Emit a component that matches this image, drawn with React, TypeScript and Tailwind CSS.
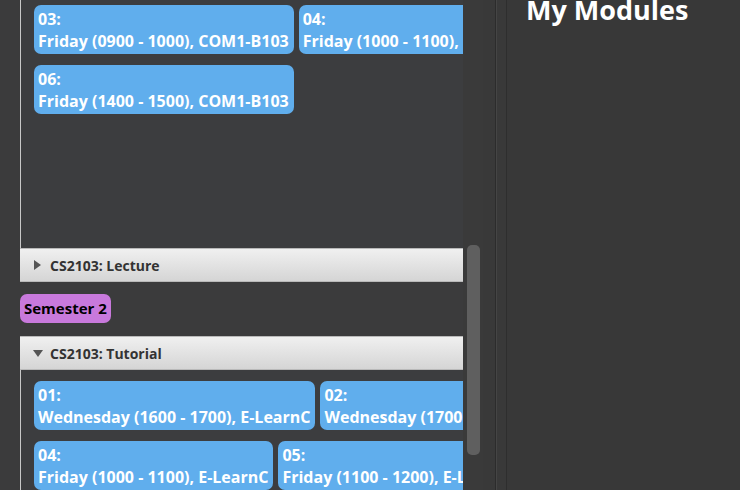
import React from "react";

const font = { fontFamily: '"Open Sans", "Noto Sans", sans-serif' };

function Card({ num, text }: { num: string; text: string }) {
  return (
    <div className="shrink-0 h-[49px] rounded-[7px] bg-[#60aeed] pl-[4px] pr-[5px] pt-[3px] text-[16px] font-bold leading-[22px] text-white whitespace-nowrap">
      <div>{num}</div>
      <div>{text}</div>
    </div>
  );
}

function Header({ open, title }: { open: boolean; title: string }) {
  return (
    <div className="flex h-[34px] shrink-0 items-center border-y border-[#b9b9b9] bg-gradient-to-b from-[#f0f0f0] to-[#d5d5d5] pl-[13px]">
      <svg width="10" height="10" viewBox="0 0 10 10" className="mr-[7px]">
        {open ? (
          <polygon points="0,2 10,2 5,9" fill="#555" />
        ) : (
          <polygon points="1,0 8,5 1,10" fill="#555" />
        )}
      </svg>
      <span className="text-[14px] font-bold text-[#333]">{title}</span>
    </div>
  );
}

export default function App() {
  return (
    <div className="flex h-[490px] w-[740px] overflow-hidden bg-[#3b3b3c]" style={font}>
      {/* left scroll content */}
      <div className="flex w-[463px] shrink-0 flex-col overflow-hidden">
        <div className="ml-[20px] flex h-[248px] shrink-0 flex-col gap-[11px] overflow-hidden border-l border-[#c8c8c8] bg-[#3c3d3f] pl-[13px] pt-[5px]">
          <div className="flex gap-[5px]">
            <Card num="03:" text="Friday (0900 - 1000), COM1-B103" />
            <Card num="04:" text="Friday (1000 - 1100), COM1-B103" />
          </div>
          <div className="flex gap-[5px]">
            <Card num="06:" text="Friday (1400 - 1500), COM1-B103" />
          </div>
        </div>
        <div className="ml-[20px]">
          <Header open={false} title="CS2103: Lecture" />
        </div>
        <div className="ml-[20px] mt-[12px] flex">
          <div className="flex h-[29px] items-center rounded-[7px] bg-[#c879dc] px-[4px] text-[15px] font-bold text-black">
            Semester 2
          </div>
        </div>
        <div className="ml-[20px] mt-[13px]">
          <Header open={true} title="CS2103: Tutorial" />
        </div>
        <div className="ml-[20px] flex flex-1 flex-col gap-[11px] overflow-hidden border-l border-[#c8c8c8] bg-[#3c3d3f] pl-[13px] pt-[11px]">
          <div className="flex gap-[5px]">
            <Card num="01:" text="Wednesday (1600 - 1700), E-LearnC" />
            <Card num="02:" text="Wednesday (1700 - 1800), E-LearnC" />
          </div>
          <div className="flex gap-[5px]">
            <Card num="04:" text="Friday (1000 - 1100), E-LearnC" />
            <Card num="05:" text="Friday (1100 - 1200), E-LearnC" />
          </div>
        </div>
      </div>
      {/* scrollbar */}
      <div className="relative w-[20px] shrink-0 bg-[#3a3a3a]">
        <div className="absolute left-[4px] top-[245px] h-[210px] w-[13px] rounded-[5px] bg-[#5f5f5f]" />
      </div>
      {/* divider */}
      <div className="w-[12px] shrink-0 bg-[#393939]" />
      <div className="w-[1px] shrink-0 bg-[#2c2c2c]" />
      <div className="w-[1px] shrink-0 bg-[#454545]" />
      <div className="w-[9px] shrink-0 bg-[#393939]" />
      <div className="w-[1px] shrink-0 bg-[#2e2e2e]" />
      {/* right panel */}
      <div className="flex-1 bg-[#383838] pl-[19px]">
        <div className="-mt-[8px] text-[27px] font-bold leading-[36px] text-white">My Modules</div>
      </div>
    </div>
  );
}
